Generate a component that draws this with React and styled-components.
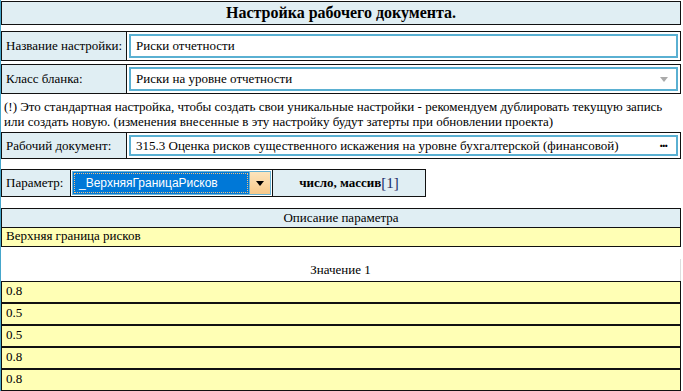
import React from 'react'
import styled, { createGlobalStyle } from 'styled-components'

const GlobalStyle = createGlobalStyle`
  html, body {
    margin: 0;
    padding: 0;
    background: #fff;
  }
`

const Page = styled.div`
  width: 683px;
  height: 391px;
  box-sizing: border-box;
  border-left: 1px solid #45a6cb;
  padding: 1px 2px 0 0;
  overflow: hidden;
  font-family: "Liberation Serif", "Times New Roman", serif;
  font-size: 13px;
  color: #000;
`

const Header = styled.div`
  height: 24px;
  box-sizing: border-box;
  border: 1px solid #111;
  background: #e0eef3;
  font-size: 16px;
  font-weight: 700;
  text-align: center;
  line-height: 21px;
`

const FieldRow = styled.div`
  display: flex;
  margin-top: ${(p) => p.gap || 6}px;
  height: ${(p) => p.h || 30}px;
  box-sizing: border-box;
  border: 1px solid #111;
  width: ${(p) => p.w || 'auto'};
`

const Label = styled.div`
  width: ${(p) => p.w || 125}px;
  flex-shrink: 0;
  background: #e0eef3;
  border-right: 1px solid #111;
  display: flex;
  align-items: center;
  padding-left: 4px;
  box-sizing: border-box;
  white-space: nowrap;
`

const InputCell = styled.div`
  flex: 1;
  padding: 2px;
  display: flex;
`

const InputBox = styled.div`
  flex: 1;
  border: 2px solid #5ab0d2;
  display: flex;
  align-items: center;
  padding: 0 6px 0 5px;
  justify-content: space-between;
  white-space: nowrap;
`

const Arrow = styled.span`
  width: 0;
  height: 0;
  border-left: 4px solid transparent;
  border-right: 4px solid transparent;
  border-top: 5px solid #aaa;
  margin-right: 2px;
`

const Dots = styled.span`
  font-weight: 700;
  font-size: 14px;
  letter-spacing: -1px;
  line-height: 1;
  margin-top: -6px;
  margin-right: 3px;
`

const Note = styled.div`
  margin-top: 5px;
  padding-left: 3px;
  line-height: 15px;
`

const SelectCell = styled.div`
  width: 199px;
  padding: 1px;
  border-right: 1px solid #111;
  display: flex;
  background: #fff;
`

const Select = styled.div`
  flex: 1;
  display: flex;
  border: 1px solid #6ab4d6;
  background: #0078d7;
`

const SelectText = styled.div`
  flex: 1;
  color: #fff;
  margin: 1px;
  outline: 1px dotted #f0c080;
  outline-offset: -1px;
  padding-left: 5px;
  display: flex;
  align-items: center;
  font-family: "Liberation Sans", Arial, sans-serif;
  font-size: 12px;
`

const DropButton = styled.div`
  width: 20px;
  background: linear-gradient(#fde4bd, #f7c98a);
  border-left: 1px solid #6ab4d6;
  display: flex;
  align-items: center;
  justify-content: center;
  &::after {
    content: '';
    border-left: 4px solid transparent;
    border-right: 4px solid transparent;
    border-top: 5px solid #000;
  }
`

const TypeCell = styled.div`
  flex: 1;
  background: #e0eef3;
  display: flex;
  align-items: center;
  justify-content: center;
  font-weight: 700;
`

const Bracket = styled.span`
  font-weight: 400;
  font-size: 15px;
  color: #1a2a66;
`

const Table = styled.div`
  margin-top: ${(p) => p.gap || 0}px;
  border: 1px solid #111;
  border-bottom: none;
`

const HeadCell = styled.div`
  height: 18px;
  background: #e0eef3;
  border-bottom: 1px solid #111;
  text-align: center;
  line-height: 18px;
`

const Cell = styled.div`
  height: ${(p) => p.h || 21}px;
  box-sizing: border-box;
  background: #ffffb5;
  border-bottom: ${(p) => (p.thin ? 1 : 2)}px solid #111;
  padding-left: 4px;
  line-height: ${(p) => (p.h || 21) - 4}px;
`

const ValueHead = styled.div`
  margin-top: 12px;
  height: 22px;
  text-align: center;
  line-height: 22px;
  border-right: 1px solid #ddd;
`

const values = ['0.8', '0.5', '0.5', '0.8', '0.8']

export default function App() {
  return (
    <>
      <GlobalStyle />
      <Page>
        <Header>Настройка рабочего документа.</Header>
        <FieldRow>
          <Label>Название настройки:</Label>
          <InputCell>
            <InputBox>Риски отчетности</InputBox>
          </InputCell>
        </FieldRow>
        <FieldRow gap={3}>
          <Label>Класс бланка:</Label>
          <InputCell>
            <InputBox>
              Риски на уровне отчетности
              <Arrow />
            </InputBox>
          </InputCell>
        </FieldRow>
        <Note>
          (!) Это стандартная настройка, чтобы создать свои уникальные настройки - рекомендуем дублировать текущую запись
          или создать новую. (изменения внесенные в эту настройку будут затерты при обновлении проекта)
        </Note>
        <FieldRow gap={3} h={27}>
          <Label>Рабочий документ:</Label>
          <InputCell>
            <InputBox>
              315.3 Оценка рисков существенного искажения на уровне бухгалтерской (финансовой)
              <Dots>...</Dots>
            </InputBox>
          </InputCell>
        </FieldRow>
        <FieldRow gap={10} h={28} w="425px">
          <Label w={69}>Параметр:</Label>
          <SelectCell>
            <Select>
              <SelectText>_ВерхняяГраницаРисков</SelectText>
              <DropButton />
            </Select>
          </SelectCell>
          <TypeCell>
            число, массив<Bracket>[1]</Bracket>
          </TypeCell>
        </FieldRow>
        <Table gap={11}>
          <HeadCell>Описание параметра</HeadCell>
          <Cell h={19} thin>Верхняя граница рисков</Cell>
        </Table>
        <ValueHead>Значение 1</ValueHead>
        <Table>
          {values.map((v, i) => (
            <Cell key={i} h={22}>{v}</Cell>
          ))}
        </Table>
      </Page>
    </>
  )
}
